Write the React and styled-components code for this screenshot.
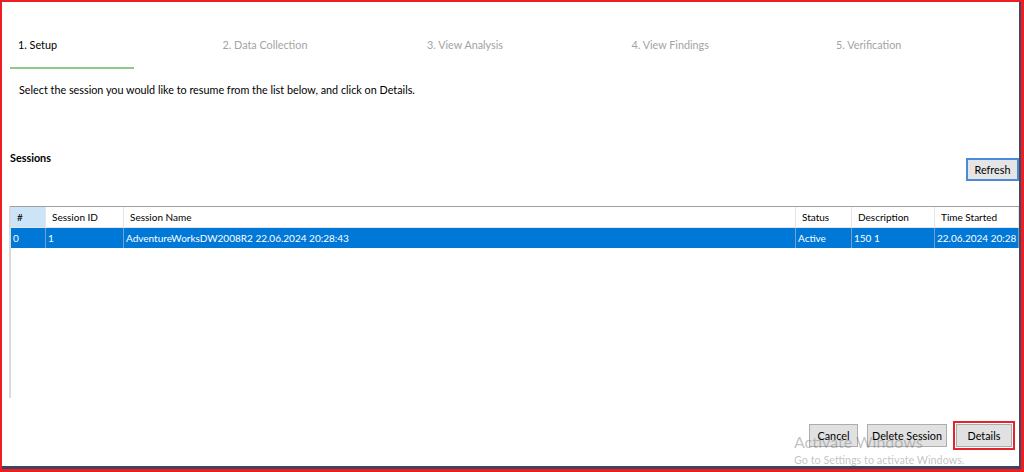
import styled, { createGlobalStyle } from 'styled-components'

const GlobalStyle = createGlobalStyle`
  html, body {
    margin: 0;
    padding: 0;
    background: #fff;
  }
  body {
    font-family: Lato, "Liberation Sans", sans-serif;
    font-size: 10.8px;
    color: #000;
  }
`

const steps = [
  '1. Setup',
  '2. Data Collection',
  '3. View Analysis',
  '4. View Findings',
  '5. Verification',
]

const columns = ['#', 'Session ID', 'Session Name', 'Status', 'Description', 'Time Started']

const sessions = [
  {
    idx: 0,
    id: 1,
    name: 'AdventureWorksDW2008R2 22.06.2024 20:28:43',
    status: 'Active',
    description: '150 1',
    started: '22.06.2024 20:28',
  },
]

export default function App() {
  return (
    <>
      <GlobalStyle />
      <Frame>
        <Window>
          <StepBar>
            {steps.map((s, i) => (
              <Step key={s} active={i === 0}>
                {s}
              </Step>
            ))}
          </StepBar>
          <StepMarker />
          <Hint>
            Select the session you would like to resume from the list below, and click on Details.
          </Hint>

          <SessionsBar>
            <SectionTitle>Sessions</SectionTitle>
            <RefreshButton>Refresh</RefreshButton>
          </SessionsBar>

          <Grid>
            <GridRow header>
              {columns.map((c, i) => (
                <HeadCell key={c} sorted={i === 0}>
                  {c}
                </HeadCell>
              ))}
            </GridRow>
            {sessions.map(s => (
              <GridRow key={s.id} selected>
                <Cell>{s.idx}</Cell>
                <Cell>{s.id}</Cell>
                <Cell>{s.name}</Cell>
                <Cell>{s.status}</Cell>
                <Cell>{s.description}</Cell>
                <Cell>{s.started}</Cell>
              </GridRow>
            ))}
          </Grid>

          <Footer>
            <Button width={49}>Cancel</Button>
            <Button width={80}>Delete Session</Button>
            <Button width={56} marked>
              Details
            </Button>
          </Footer>

          <Watermark>
            <WatermarkTitle>Activate Windows</WatermarkTitle>
            <WatermarkText>Go to Settings to activate Windows.</WatermarkText>
          </Watermark>
        </Window>
      </Frame>
    </>
  )
}

const Frame = styled.div`
  width: 1024px;
  height: 472px;
  box-sizing: border-box;
  border: solid #ee1c24;
  border-width: 2px 3px 3px 2px;
  display: flex;
`

const Window = styled.div`
  position: relative;
  flex: 1;
  display: flex;
  flex-direction: column;
  background: #fff;
  border-right: 2px solid #3e4a5e;
  border-bottom: 3px solid #3a465b;
  overflow: hidden;
`

const StepBar = styled.div`
  display: grid;
  grid-template-columns: repeat(4, 204.5px) auto;
  padding: 36px 0 0 16px;
  line-height: 14px;
`

const Step = styled.div`
  color: ${p => (p.active ? '#000' : '#a3a3a3')};
  white-space: nowrap;
`

const StepMarker = styled.div`
  width: 124px;
  height: 2px;
  margin: 15px 0 0 8px;
  background: #8ccb8c;
`

const Hint = styled.div`
  margin-top: 14px;
  padding-left: 17px;
  line-height: 14px;
`

const SessionsBar = styled.div`
  display: flex;
  justify-content: space-between;
  align-items: flex-start;
  margin-top: 54px;
  padding-left: 8px;
`

const SectionTitle = styled.div`
  font-weight: bold;
  line-height: 14px;
`

const RefreshButton = styled.button`
  margin-top: 7px;
  width: 53px;
  height: 23px;
  padding: 0;
  font: inherit;
  color: #000;
  background: #e5e5e5;
  border: 2px solid #4a8ad6;
`

const Grid = styled.div`
  margin: 25px 0 0 7px;
  height: 192px;
  box-sizing: border-box;
  border-top: 1px solid #a0a0a0;
  border-left: 2px solid #dadada;
  font-size: 10px;
`

const GridRow = styled.div`
  display: grid;
  grid-template-columns: 35px 78px 672px 56px 83px 1fr;
  height: 20px;
  background: ${p => (p.selected ? '#0078d7' : '#fff')};
  color: ${p => (p.selected ? '#fff' : '#000')};
  border-bottom: ${p => (p.header ? '1px solid #e5e5e5' : 'none')};
`

const HeadCell = styled.div`
  display: flex;
  align-items: center;
  padding-left: 6px;
  background: ${p => (p.sorted ? '#cce4f7' : 'transparent')};
  border-right: 1px solid #e5e5e5;
  white-space: nowrap;
  overflow: hidden;
`

const Cell = styled.div`
  display: flex;
  align-items: center;
  padding-left: 2px;
  border-right: 1px solid #7d9ec2;
  white-space: nowrap;
  overflow: hidden;
`

const Footer = styled.div`
  display: flex;
  justify-content: flex-end;
  gap: 9px;
  margin-top: 26px;
  padding-right: 7px;
`

const Button = styled.button`
  width: ${p => p.width}px;
  height: 23px;
  padding: 0;
  font: inherit;
  color: #000;
  background: #e1e1e1;
  border: 1px solid #adadad;
  outline: ${p => (p.marked ? '2px solid #e3242b' : 'none')};
  outline-offset: 1px;
`

const Watermark = styled.div`
  position: absolute;
  left: 792px;
  top: 430px;
  color: rgba(120, 120, 120, 0.45);
  pointer-events: none;
`

const WatermarkTitle = styled.div`
  font-size: 16px;
  line-height: 20px;
`

const WatermarkText = styled.div`
  font-size: 10.8px;
  line-height: 14px;
  margin-top: 1px;
`
